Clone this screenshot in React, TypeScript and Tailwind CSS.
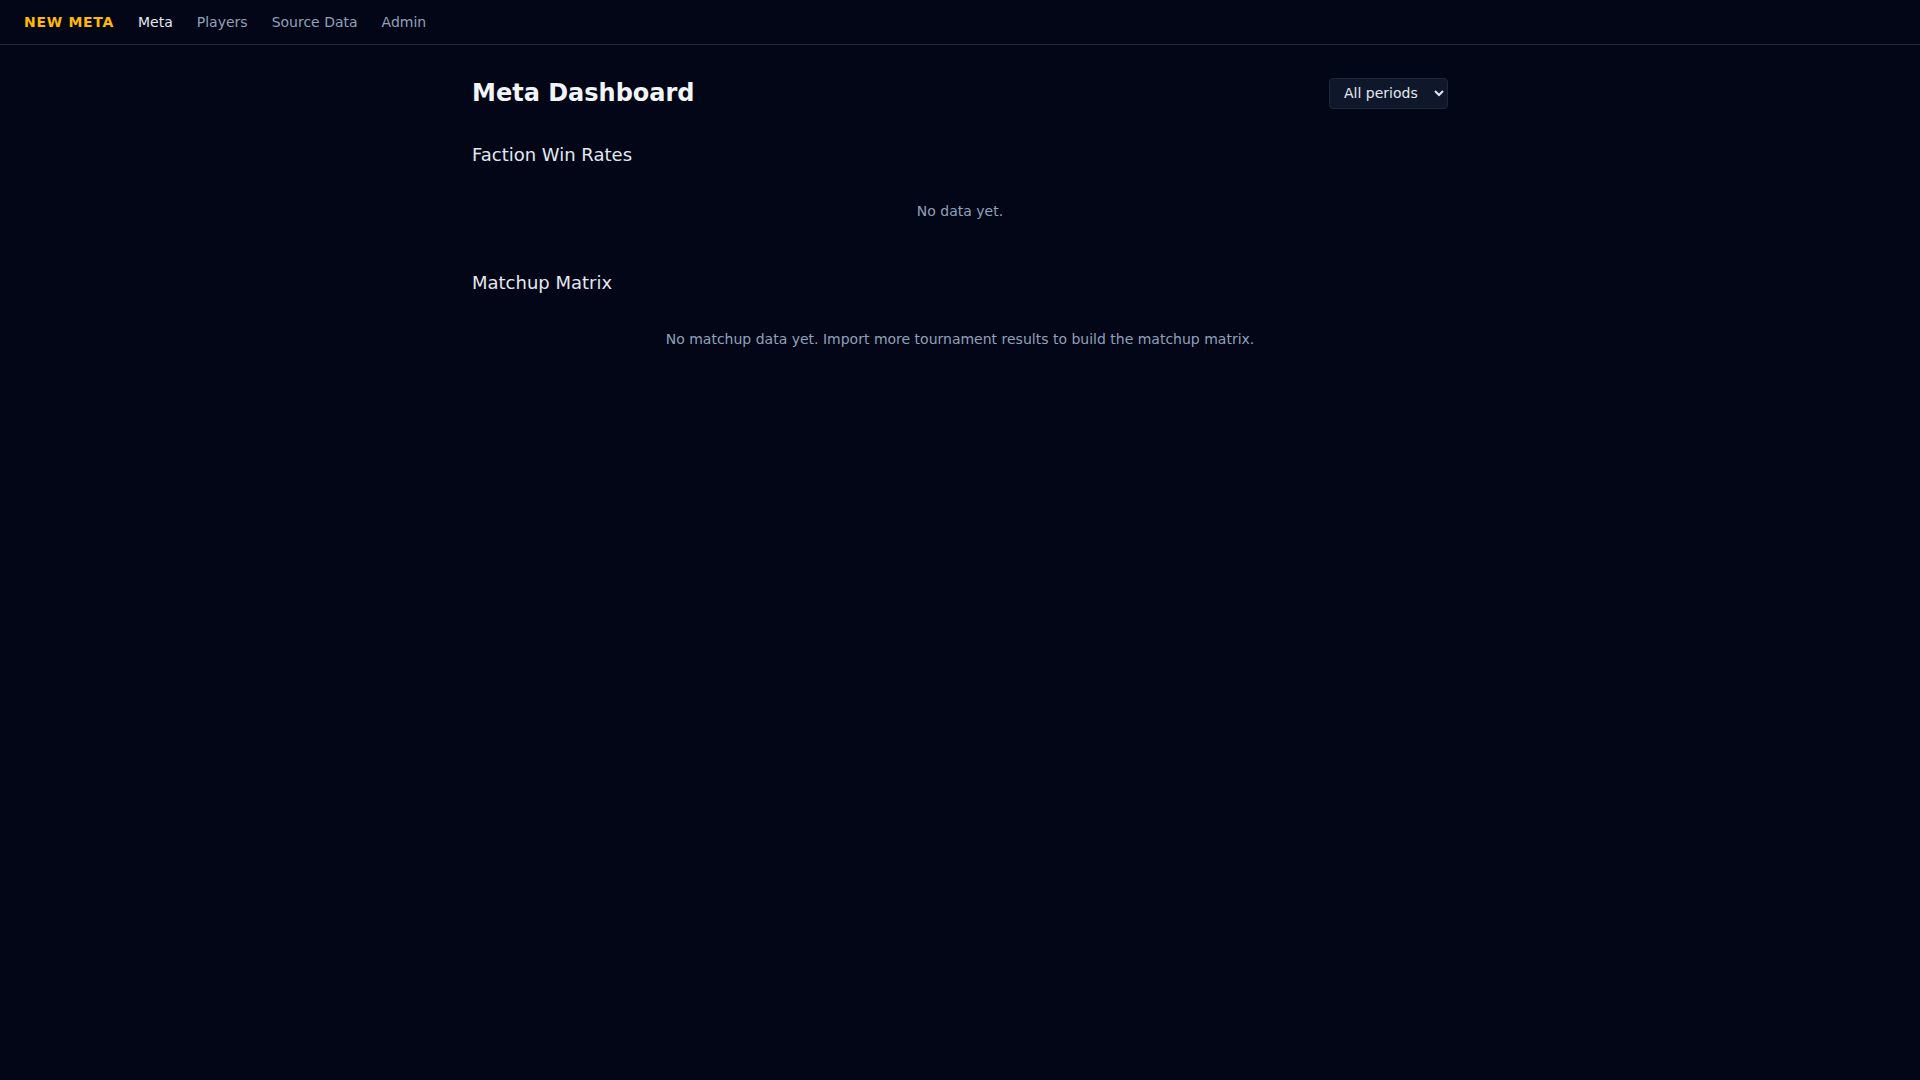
import { useState } from 'react';

const navLinks = ['Meta', 'Players', 'Source Data', 'Admin'];

export default function App() {
  const [period, setPeriod] = useState('all');
  const active = 'Meta';

  return (
    <div className="min-h-screen bg-[#030617] text-slate-200" style={{ fontFamily: '"DejaVu Sans", sans-serif' }}>
      <nav className="h-[45px] flex items-center gap-6 px-6 border-b border-[#1e2939]">
        <span className="text-sm font-bold tracking-wider text-amber-400">NEW META</span>
        {navLinks.map((l) => (
          <a
            key={l}
            href="#"
            className={l === active ? 'text-sm text-slate-200' : 'text-sm text-slate-400'}
          >
            {l}
          </a>
        ))}
      </nav>

      <main className="max-w-5xl mx-auto px-6 py-8">
        <div className="flex items-center justify-between mb-8">
          <h1 className="text-2xl font-bold text-slate-100">Meta Dashboard</h1>
          <select
            value={period}
            onChange={(e) => setPeriod(e.target.value)}
            className="h-[31px] w-[119px] rounded bg-[#0f172b] border border-[#1e2939] text-sm text-slate-200 pl-2.5 pr-1"
          >
            <option value="all">All periods</option>
            <option value="30">Last 30 days</option>
            <option value="90">Last 90 days</option>
          </select>
        </div>

        <section className="mb-8">
          <h2 className="text-lg text-slate-200 mb-4">Faction Win Rates</h2>
          <p className="py-4 text-center text-sm text-slate-400">No data yet.</p>
        </section>

        <section>
          <h2 className="text-lg text-slate-200 mb-4">Matchup Matrix</h2>
          <p className="py-4 text-center text-sm text-slate-400">
            No matchup data yet. Import more tournament results to build the matchup matrix.
          </p>
        </section>
      </main>
    </div>
  );
}
